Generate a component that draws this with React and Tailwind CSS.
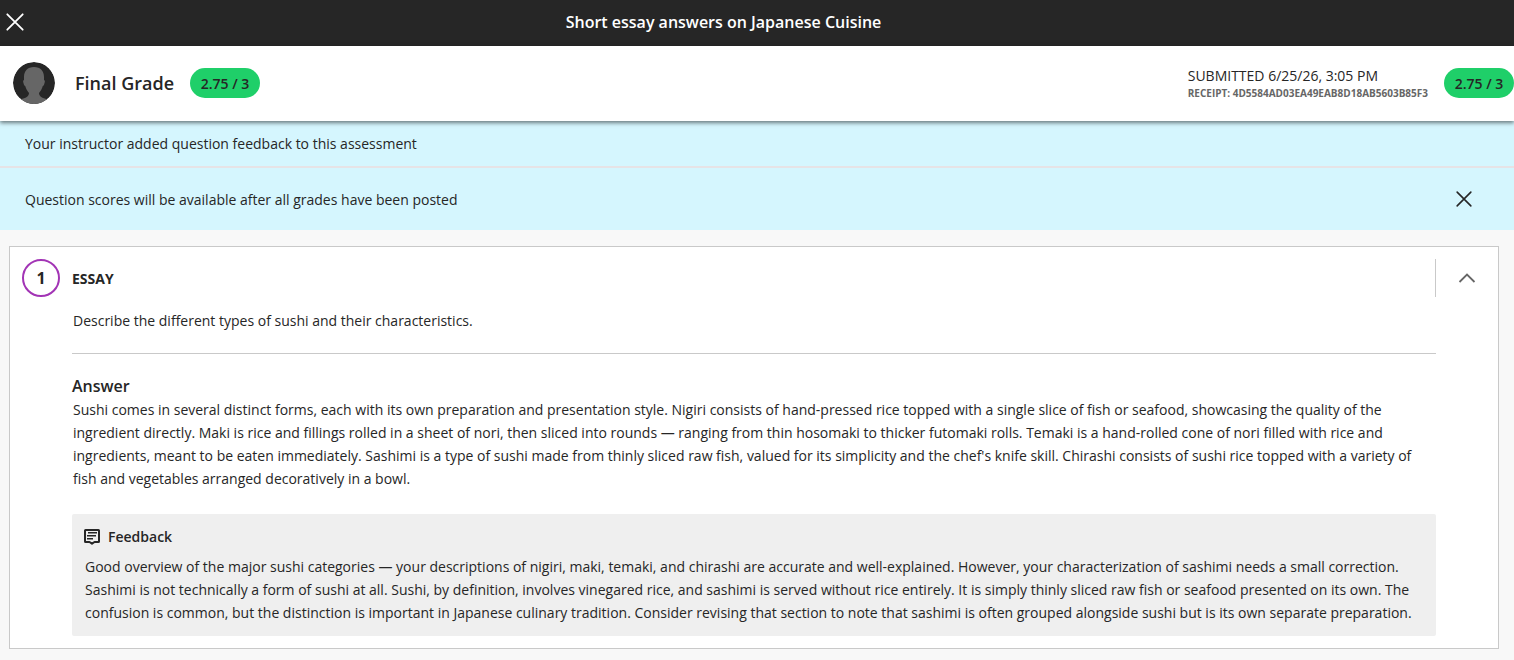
import React, { useId, useState } from "react";

function CloseIcon({ className }) {
  return (
    <svg viewBox="0 0 18 18" className={className} fill="none" stroke="currentColor" strokeWidth="1.8" aria-hidden="true">
      <path d="M1.3 1.3 16.7 16.7M16.7 1.3 1.3 16.7" strokeLinecap="round" />
    </svg>
  );
}

function ChevronIcon({ className }) {
  return (
    <svg viewBox="0 0 18 10" className={className} fill="none" stroke="currentColor" strokeWidth="1.8" aria-hidden="true">
      <path d="M1.5 9 9 1.500 16.500 9" />
    </svg>
  );
}

function FeedbackIcon() {
  return (
    <svg viewBox="0 0 16 16" className="size-4 shrink-0" fill="none" stroke="#262626" aria-hidden="true">
      <path d="M1 1.500Q1 1 1.500 1H14.500Q15 1 15 1.500V12.500Q15 13 14.500 13H10.500L8 14.700 5.500 13H1.500Q1 13 1 12.500Z" strokeWidth="2" strokeLinejoin="round" />
      <path d="M4 3.800H13M3 6.800H12M3 9.800H9" strokeWidth="1.5" />
    </svg>
  );
}

function Avatar() {
  return (
    <svg viewBox="0 0 42 42" className="size-[42px] shrink-0 rounded-full" role="img" aria-label="Student">
      <circle cx="21" cy="21" r="21" fill="#262626" />
      <path
        d="M21 5C27.500 5 31 9 31 15V18C32.200 18.200 32 19.500 31.400 21.500C31 23 30.600 23.800 29.800 24C29 27 27.500 29 26 31C26.200 34.500 29 36 34.500 37.200C27 43.600 15 43.600 7.500 37.200C13 36 15.800 34.500 16 31C14.500 29 13 27 12.200 24C11.400 23.800 11 23 10.600 21.500C10 19.500 9.800 18.200 11 18V15C11 9 14.500 5 21 5Z"
        fill="#666666"
      />
    </svg>
  );
}

function GradePill({ score }) {
  return (
    <span className="flex h-[30px] w-[70px] shrink-0 items-center justify-center rounded-full bg-[#1fcf69] pt-0.5 text-sm font-semibold text-[#262626]">
      {score}
    </span>
  );
}

function Question({ number, type, prompt, answer, feedback }) {
  const [open, setOpen] = useState(true);
  const bodyId = useId();
  return (
    <article className="mr-[15px] ml-[9px] border border-[#c9c9c9] bg-white px-3 py-3">
      <header className="flex h-[38px] items-center">
        <span className="flex size-[38px] items-center justify-center rounded-full border-2 border-[#a234b5] text-base font-bold">
          {number}
        </span>
        <h2 className="ml-3 flex-1 pt-0.5 text-sm font-bold">{type}</h2>
        <div className="flex h-full w-[51px] items-center justify-end border-l border-[#c9c9c9] pr-[10px]">
          <button
            type="button"
            aria-label="Toggle question"
            aria-expanded={open}
            aria-controls={bodyId}
            onClick={() => setOpen(!open)}
            className="text-[#666666]"
          >
            <ChevronIcon className={open ? "h-[10px] w-[18px]" : "h-[10px] w-[18px] rotate-180"} />
          </button>
        </div>
      </header>
      {open && (
        <div id={bodyId} className="mr-[50px] ml-[50px]">
          <p className="border-b border-[#c9c9c9] px-px pt-3 pb-[21px] text-sm leading-[23px]">{prompt}</p>
          <h3 className="mt-5 text-base font-semibold">Answer</h3>
          <p className="px-px text-sm leading-[23px]">{answer}</p>
          <section className="mt-6 rounded-xs bg-[#efefef] px-3 pt-3 pb-3">
            <h3 className="flex items-center gap-2 text-sm leading-[22px] font-semibold">
              <FeedbackIcon />
              Feedback
            </h3>
            <p className="mt-[7px] px-px text-sm leading-[23px]">{feedback}</p>
          </section>
        </div>
      )}
    </article>
  );
}

export default function App() {
  const [showNotice, setShowNotice] = useState(true);
  return (
    <div className="min-h-screen bg-[#f8f8f8] font-['Open_Sans','Noto_Sans',sans-serif] text-[#262626]">
      <header className="flex h-[46px] items-center bg-[#262626] pr-[91px] pl-[6px] text-white">
        <button type="button" aria-label="Close" className="mb-[3px]">
          <CloseIcon className="size-[18px]" />
        </button>
        <h1 className="mb-[3px] flex-1 text-center text-base font-semibold">Short essay answers on Japanese Cuisine</h1>
      </header>

      <section className="relative flex h-[75px] items-center bg-white pb-0.5 pl-[13px] shadow-[0_2px_4px_rgba(0,0,0,0.5)]">
        <Avatar />
        <h2 className="ml-5 text-lg font-semibold">Final Grade</h2>
        <div className="ml-4">
          <GradePill score="2.75 / 3" />
        </div>
        <div className="ml-auto pt-0.5">
          <p className="text-sm leading-[18px]">SUBMITTED 6/25/26, 3:05 PM</p>
          <p className="text-[10px] leading-4 font-bold text-[#666666]">RECEIPT: 4D5584AD03EA49EAB8D18AB5603B85F3</p>
        </div>
        <div className="ml-4">
          <GradePill score="2.75 / 3" />
        </div>
      </section>

      <p className="flex h-[47px] items-center border-b-2 border-[#e6e3e6] bg-[#d5f6fe] px-[25px] text-sm">
        Your instructor added question feedback to this assessment
      </p>
      {showNotice && (
        <div className="flex h-[62px] items-center justify-between bg-[#d5f6fe] pr-[42px] pl-[25px]">
          <p className="pt-0.5 text-sm">Question scores will be available after all grades have been posted</p>
          <button type="button" aria-label="Dismiss" onClick={() => setShowNotice(false)}>
            <CloseIcon className="size-4" />
          </button>
        </div>
      )}

      <main className="pt-4 pb-[11px]">
        <Question
          number="1"
          type="ESSAY"
          prompt="Describe the different types of sushi and their characteristics."
          answer="Sushi comes in several distinct forms, each with its own preparation and presentation style. Nigiri consists of hand-pressed rice topped with a single slice of fish or seafood, showcasing the quality of the ingredient directly. Maki is rice and fillings rolled in a sheet of nori, then sliced into rounds — ranging from thin hosomaki to thicker futomaki rolls. Temaki is a hand-rolled cone of nori filled with rice and ingredients, meant to be eaten immediately. Sashimi is a type of sushi made from thinly sliced raw fish, valued for its simplicity and the chef's knife skill. Chirashi consists of sushi rice topped with a variety of fish and vegetables arranged decoratively in a bowl."
          feedback="Good overview of the major sushi categories — your descriptions of nigiri, maki, temaki, and chirashi are accurate and well-explained. However, your characterization of sashimi needs a small correction. Sashimi is not technically a form of sushi at all. Sushi, by definition, involves vinegared rice, and sashimi is served without rice entirely. It is simply thinly sliced raw fish or seafood presented on its own. The confusion is common, but the distinction is important in Japanese culinary tradition. Consider revising that section to note that sashimi is often grouped alongside sushi but is its own separate preparation."
        />
      </main>
    </div>
  );
}
